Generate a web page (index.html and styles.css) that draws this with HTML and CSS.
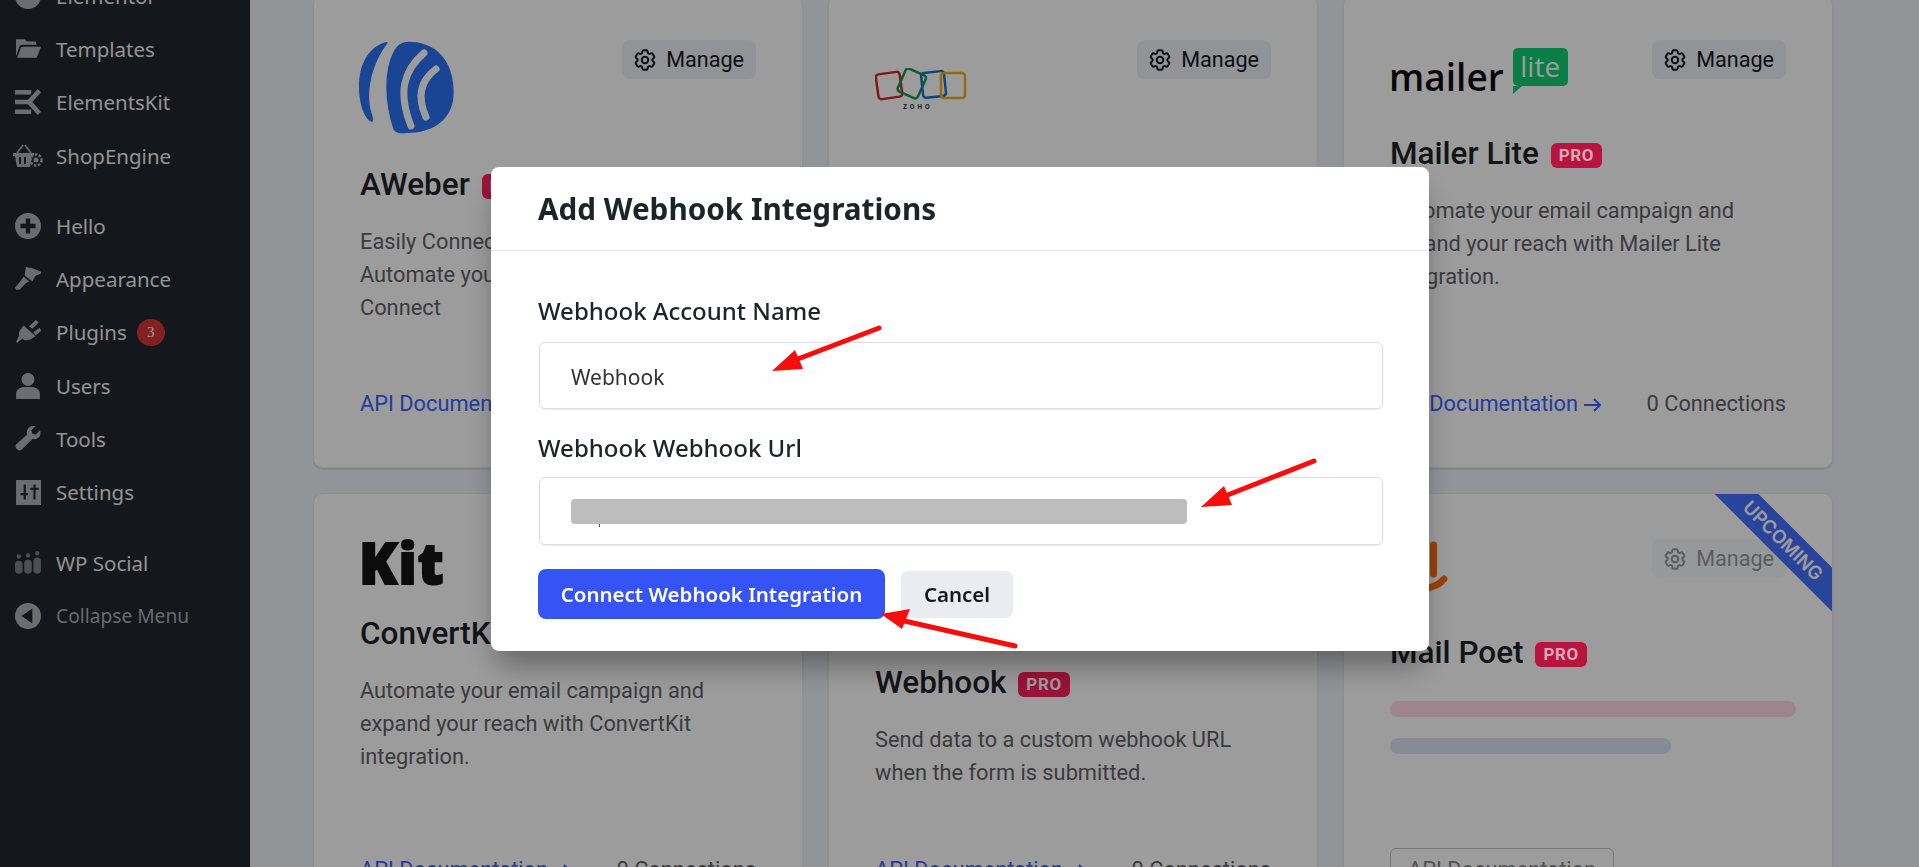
FILE: index.html
```html
<!DOCTYPE html>
<html lang="en">
<head>
    <meta charset="UTF-8">
    <title>Integrations</title>
    <link rel="stylesheet" href="styles.css">
</head>
<body>
    <div class="layout">
        <nav class="sidebar">
            <a class="menu-item menu-first"><svg class="menu-icon" viewBox="0 0 24 24"><circle cx="12" cy="12" r="12"/></svg>Elementor</a>
            <a class="menu-item"><svg class="menu-icon" viewBox="0 0 24 24"><path d="M1 3h8l2 2h8l1 3H7c-2 0-3 1-3 2l-3 9zM7 10h17l-4 10H2l3-8c0-1 1-2 2-2z"/></svg>Templates</a>
            <a class="menu-item"><svg class="menu-icon" viewBox="0 0 24 24"><path d="M0 1h15v4H0zM0 10h12v4H0zM0 19h15v4H0zM21 0l3 3-8 9 8 9-3 3-11-12z"/></svg>ElementsKit</a>
            <a class="menu-item"><svg class="menu-icon menu-icon-wide" viewBox="0 0 31 25"><path d="M0 10h21v2h-2l-2 12H4L2 13H0zM6 14v7h2v-7zM11 14v7h2v-7z"/><path fill="none" stroke="#a6aaae" stroke-width="1.800" d="M4 10l6-8M18 10l-6-8"/><circle cx="23" cy="17" r="5.500" fill="none" stroke="#b0b4b8" stroke-width="2.500" stroke-dasharray="2.500 1.500"/><circle cx="23" cy="17" r="2.500"/></svg>ShopEngine</a>
            <a class="menu-item menu-gap"><svg class="menu-icon" viewBox="0 0 24 24"><path fill-rule="evenodd" d="M12 0a12 12 0 1 0 0 24 12 12 0 0 0 0-24zM10 5h4v5h5v4h-5v5h-4v-5H5v-4h5z"/></svg>Hello</a>
            <a class="menu-item"><svg class="menu-icon" viewBox="0 0 24 24"><path d="M10 1l6 1 10 4-7 3-3 5-7-5zM8 10l5 4-3 2-6 6-3 0-1-2 5-6z"/></svg>Appearance</a>
            <a class="menu-item"><svg class="menu-icon" viewBox="0 0 24 24"><path d="M8 6l11 10-5 3c-3 1-6 1-7-1l-5 4-1-1 3-6c-1-2 0-4 1-5zM13 7l6-6 3 2-6 6zM17 12l6-4 1 3-5 4z"/></svg>Plugins<span class="update-badge">3</span></a>
            <a class="menu-item"><svg class="menu-icon" viewBox="0 0 24 24"><circle cx="12" cy="6" r="6"/><path d="M1 24v-5c0-3 4-6 7-6h8c3 0 7 3 7 6v5z"/></svg>Users</a>
            <a class="menu-item"><svg class="menu-icon" viewBox="0 0 24 24"><path d="M23 4l-4 4-3-1-1-3 4-4c-4-1-9 2-8 8L1 17c-2 3 2 7 5 5l10-10c5 1 9-3 7-8z"/></svg>Tools</a>
            <a class="menu-item"><svg class="menu-icon" viewBox="0 0 24 24"><path fill-rule="evenodd" d="M1 1h23v23H1zM8 5v8H5v2h3v4h2v-4h2v-2h-2V5zM17 5v3h-3v2h3v9h2v-9h3V8h-3V5z"/></svg>Settings</a>
            <a class="menu-item menu-gap menu-social"><svg class="menu-icon" viewBox="0 0 24 24"><circle cx="3.500" cy="6" r="2"/><circle cx="12" cy="5" r="2"/><circle cx="20.500" cy="3" r="2"/><rect x="0" y="10" width="7" height="12" rx="3.500"/><rect x="8.500" y="9" width="7" height="13" rx="3.500"/><rect x="17" y="7" width="7" height="15" rx="3.500"/></svg>WP Social</a>
            <a class="menu-item menu-collapse"><svg class="menu-icon" viewBox="0 0 24 24"><path fill-rule="evenodd" d="M12 0a12 12 0 1 0 0 24 12 12 0 0 0 0-24zM16 5v14L6 12z"/></svg>Collapse Menu</a>
        </nav>

        <main class="content">
            <div class="cards">
                <article class="card">
                    <button class="manage"><svg class="gear" viewBox="0 0 24 24"><use href="#gear"/></svg>Manage</button>
                    <div class="logo logo-aweber">
                        <svg width="95" height="93" viewBox="0 0 95 93"><path fill="#2b71f4" d="M27 1C12 5 0 20 0 46c0 18 6 33 13 35 2-1 1-4-1-11C7 52 12 24 28 3c1-2 1-2-1-2zM53 1C42 0 38 5 35 10 25 28 25 60 34 87c1 4 5 6 14 5 25 0 42-12 46-32 3-24-5-45-22-54-6-3-12-5-19-5z"/><path fill="none" stroke="#ffffff" stroke-width="7" stroke-linecap="round" d="M65 12C44 30 39 52 52 85M77 28C61 40 58 56 67 76"/></svg>
                    </div>
                    <h3 class="card-title">AWeber <span class="pro">PRO</span></h3>
                    <p class="card-text">Easily Connect AWeber to your forms.<br>Automate your email list growth.<br>Connect</p>
                    <div class="card-foot"><a class="doc-link">API Documentation <svg class="arrow" viewBox="0 0 19 16"><path d="M1 8h16M11 2l6 6-6 6"/></svg></a><span>0 Connections</span></div>
                </article>
                <article class="card">
                    <button class="manage"><svg class="gear" viewBox="0 0 24 24"><use href="#gear"/></svg>Manage</button>
                    <div class="logo logo-zoho">
                        <svg width="92" height="42" viewBox="0 0 92 42"><g fill="none" stroke-width="2.500"><rect x="2" y="5" width="24" height="25" rx="3" stroke="#d9232d" transform="rotate(-8 14 17)"/><rect x="26" y="3" width="22" height="25" rx="3" stroke="#129a4c" transform="rotate(24 37 15)"/><rect x="47" y="4" width="23" height="25" rx="3" stroke="#1f6fc4" transform="rotate(-6 58 16)"/><rect x="66" y="5" width="24" height="25" rx="3" stroke="#f0ae1f"/></g><text x="28" y="41" class="zoho-text">ZOHO</text></svg>
                    </div>
                    <h3 class="card-title">Zoho <span class="pro">PRO</span></h3>
                    <p class="card-text">Automate your email campaign.</p>
                    <div class="card-foot"><a class="doc-link">API Documentation <svg class="arrow" viewBox="0 0 19 16"><path d="M1 8h16M11 2l6 6-6 6"/></svg></a><span>0 Connections</span></div>
                </article>
                <article class="card">
                    <button class="manage"><svg class="gear" viewBox="0 0 24 24"><use href="#gear"/></svg>Manage</button>
                    <div class="logo logo-mailer">
                        <span class="mailer-word">mailer</span><span class="mailer-lite">lite</span>
                    </div>
                    <h3 class="card-title">Mailer Lite <span class="pro pro-bright">PRO</span></h3>
                    <p class="card-text">Automate your email campaign and<br>expand your reach with Mailer Lite<br>integration.</p>
                    <div class="card-foot"><a class="doc-link">API Documentation <svg class="arrow" viewBox="0 0 19 16"><path d="M1 8h16M11 2l6 6-6 6"/></svg></a><span>0 Connections</span></div>
                </article>
                <article class="card">
                    <button class="manage"><svg class="gear" viewBox="0 0 24 24"><use href="#gear"/></svg>Manage</button>
                    <div class="logo logo-kit">
                        <span class="kit-word">Kit</span>
                    </div>
                    <h3 class="card-title">ConvertKit <span class="pro">PRO</span></h3>
                    <p class="card-text">Automate your email campaign and<br>expand your reach with ConvertKit<br>integration.</p>
                    <div class="card-foot"><a class="doc-link">API Documentation <svg class="arrow" viewBox="0 0 19 16"><path d="M1 8h16M11 2l6 6-6 6"/></svg></a><span>0 Connections</span></div>
                </article>
                <article class="card">
                    <button class="manage"><svg class="gear" viewBox="0 0 24 24"><use href="#gear"/></svg>Manage</button>
                    <div class="logo logo-webhook"></div>
                    <h3 class="card-title">Webhook <span class="pro">PRO</span></h3>
                    <p class="card-text">Send data to a custom webhook URL<br>when the form is submitted.</p>
                    <div class="card-foot"><a class="doc-link">API Documentation <svg class="arrow" viewBox="0 0 19 16"><path d="M1 8h16M11 2l6 6-6 6"/></svg></a><span>0 Connections</span></div>
                </article>
                <article class="card">
                    <button class="manage manage-off"><svg class="gear" viewBox="0 0 24 24"><use href="#gear"/></svg>Manage</button>
                    <div class="ribbon">UPCOMING</div>
                    <div class="logo logo-poet">
                        <svg width="60" height="53" viewBox="0 0 60 53"><path fill="none" stroke="#ff690d" stroke-width="7" stroke-linecap="round" d="M43.500 5v29M10 45c14 6 36 5 44-6"/></svg>
                    </div>
                    <h3 class="card-title">Mail Poet <span class="pro pro-bright">PRO</span></h3>
                    <div class="skeleton skeleton-pink"></div>
                    <div class="skeleton skeleton-blue"></div>
                    <div class="card-foot"><a class="doc-box">API Documentation</a></div>
                </article>
            </div>
        </main>
    </div>

    <div class="backdrop"></div>

    <div class="modal">
        <h2 class="modal-title">Add Webhook Integrations</h2>
        <form class="modal-body">
            <label class="field-label">Webhook Account Name</label>
            <div class="field field-name">Webhook</div>
            <label class="field-label">Webhook Webhook Url</label>
            <div class="field field-url"><span class="blurred"></span></div>
            <div class="modal-actions">
                <button type="button" class="btn-connect">Connect Webhook Integration</button>
                <button type="button" class="btn-cancel">Cancel</button>
            </div>
        </form>
    </div>

    <!-- red markers on top of the screenshot -->
    <svg class="annotations" width="1919" height="867" viewBox="0 0 1919 867">
        <g stroke="#f80c0c" stroke-width="5" stroke-linecap="round" fill="#f80c0c">
            <line x1="879" y1="328" x2="790" y2="362"/>
            <line x1="1314" y1="461" x2="1220" y2="498"/>
            <line x1="1015" y1="646" x2="900" y2="620"/>
        </g>
        <g fill="#f80c0c">
            <path d="M772 371l23-21 8 19z"/>
            <path d="M1201 507l23-21 8 19z"/>
            <path d="M881 614l29-5-8 20z"/>
        </g>
    </svg>

    <svg class="sprite" width="0" height="0">
        <symbol id="gear" viewBox="0 0 24 24">
            <path fill="none" stroke="currentColor" stroke-width="1.800" stroke-linejoin="round" d="M9.594 3.940c.09-.542.56-.94 1.110-.94h2.593c.55 0 1.020.398 1.110.94l.213 1.281c.063.374.313.686.645.87.074.04.147.083.22.127.325.196.72.257 1.075.124l1.217-.456a1.125 1.125 0 0 1 1.370.49l1.296 2.247a1.125 1.125 0 0 1-.26 1.431l-1.003.827c-.293.241-.438.613-.43.992a7.723 7.723 0 0 1 0 .255c-.008.378.137.75.43.991l1.004.827c.424.35.534.955.26 1.430l-1.298 2.247a1.125 1.125 0 0 1-1.369.491l-1.217-.456c-.355-.133-.75-.072-1.076.124a6.470 6.470 0 0 1-.22.128c-.331.183-.581.495-.644.869l-.213 1.281c-.09.543-.56.94-1.110.94h-2.594c-.55 0-1.019-.398-1.110-.94l-.213-1.281c-.062-.374-.312-.686-.644-.87a6.520 6.520 0 0 1-.22-.127c-.325-.196-.72-.257-1.076-.124l-1.217.456a1.125 1.125 0 0 1-1.369-.49l-1.297-2.247a1.125 1.125 0 0 1 .26-1.431l1.004-.827c.292-.24.437-.613.43-.991a6.932 6.932 0 0 1 0-.255c.007-.38-.138-.751-.43-.992l-1.004-.827a1.125 1.125 0 0 1-.26-1.430l1.297-2.247a1.125 1.125 0 0 1 1.370-.491l1.216.456c.356.133.751.072 1.076-.124.072-.044.146-.086.22-.128.332-.183.582-.495.644-.869l.214-1.280z"/>
            <circle cx="12" cy="12" r="3" fill="none" stroke="currentColor" stroke-width="1.800"/>
        </symbol>
    </svg>
</body>
</html>
```

FILE: styles.css
```css
* {
    box-sizing: border-box;
}
html, body {
    margin: 0;
    height: 100%;
    overflow: hidden;
}
body {
    font-family: Roboto, sans-serif;
    background-color: #f1f2f9;
}
.layout {
    display: flex;
    height: 867px;
    overflow: hidden;
}

/* admin menu */
.sidebar {
    width: 250px;
    flex-shrink: 0;
    background-color: #21262f;
    font-family: "Noto Sans", sans-serif;
    font-size: 20.5px;
    color: #f0f0f1;
}
.menu-item {
    display: flex;
    align-items: center;
    height: 53.3px;
    padding-left: 15px;
}
.menu-first {
    margin-top: -31px;
}
.menu-gap {
    margin-top: 17px;
}
.menu-icon {
    width: 26px;
    height: 26px;
    margin-right: 15px;
    fill: #b0b4b8;
}
.menu-icon-wide {
    width: 31px;
    height: 25px;
    margin-left: -2px;
    margin-right: 12px;
}
.menu-collapse {
    color: #acafb4;
    font-size: 19.2px;
}
.menu-social .menu-icon {
    fill: #7d8085;
}
.update-badge {
    display: inline-block;
    margin-left: 10px;
    width: 28px;
    height: 27px;
    line-height: 27px;
    border-radius: 14px;
    background-color: #d63638;
    color: #fff;
    font-family: "Liberation Serif", serif;
    font-size: 15px;
    text-align: center;
}

/* integration cards */
.content {
    flex: 1;
    padding: 0 86px 0 63px;
}
.cards {
    display: grid;
    grid-template-columns: repeat(3, 490px);
    grid-template-rows: 474px 441px;
    gap: 25px;
    margin-top: -6px;
}
.card {
    position: relative;
    display: flex;
    flex-direction: column;
    padding: 46px 46px 50px;
    background-color: #fff;
    border: 1px solid #e8e8f0;
    border-radius: 10px;
    box-shadow: 0 2px 2px rgba(0, 0, 0, 0.1);
    overflow: hidden;
}
.manage {
    position: absolute;
    top: 45px;
    right: 46px;
    display: flex;
    align-items: center;
    gap: 8px;
    height: 39px;
    padding: 0 12px 0 10px;
    border: 0;
    border-radius: 8px;
    background-color: #eef0f6;
    color: #14171f;
    font-family: Roboto, sans-serif;
    font-size: 21.6px;
}
.manage-off {
    opacity: 0.45;
}
.gear {
    width: 26px;
    height: 26px;
}
.logo-aweber {
    height: 93px;
    margin-left: -1px;
    margin-bottom: 32px;
}
.logo-zoho {
    height: 41px;
    margin-top: 27px;
    margin-bottom: 58px;
}
.logo-mailer {
    display: flex;
    align-items: flex-end;
    height: 46px;
    margin-top: 7px;
    margin-left: -1px;
    margin-bottom: 41px;
    font-family: "Open Sans", sans-serif;
}
.mailer-word {
    margin-bottom: -6px;
    font-size: 37px;
    font-weight: 600;
    line-height: 46px;
    color: #0d0d0f;
}
.mailer-lite {
    position: relative;
    width: 55px;
    height: 38px;
    margin-left: 9px;
    margin-bottom: 8px;
    border-radius: 5px;
    background-color: #12cc74;
    color: #fff;
    font-size: 28px;
    line-height: 36px;
    text-align: center;
}
.mailer-lite::after {
    content: "";
    position: absolute;
    left: 0;
    bottom: -8px;
    border-top: 8px solid #12cc74;
    border-right: 9px solid transparent;
}
.logo-kit {
    height: 44px;
    margin-left: -1px;
    margin-bottom: 31px;
}
.kit-word {
    font-family: "Open Sans", sans-serif;
    font-size: 56px;
    font-weight: 800;
    line-height: 44px;
    letter-spacing: 1px;
    color: #141416;
    -webkit-text-stroke: 2px #141416;
}
.logo-webhook {
    height: 124px;
}
.logo-poet {
    height: 53px;
    margin-bottom: 41px;
}
.card-title {
    margin: 0 0 21px;
    font-size: 31.5px;
    font-weight: 500;
    line-height: 38px;
    color: #1d2327;
}
.pro {
    display: inline-block;
    margin-left: 4px;
    padding: 0 8px;
    height: 25px;
    line-height: 25px;
    border-radius: 6px;
    background-color: #ff1e5c;
    color: #fff;
    font-size: 17px;
    font-weight: 700;
    letter-spacing: 0.6px;
    vertical-align: 3px;
}
/* these two sit above the dimmed layer in the shot */
.pro-bright {
    position: relative;
    z-index: 3;
    background-color: #b9143f;
    color: #dba8b8;
}
.card-text {
    margin: 0;
    font-size: 21.8px;
    line-height: 33px;
    color: #616168;
}
.card-foot {
    display: flex;
    justify-content: space-between;
    margin-top: auto;
    font-size: 21.8px;
    line-height: 26px;
    color: #616168;
}
.doc-link {
    color: #4060ff;
}
.arrow {
    width: 19px;
    height: 16px;
    vertical-align: -2px;
    fill: none;
    stroke: currentColor;
    stroke-width: 2;
}
.doc-box {
    display: block;
    margin: -9px 0;
    padding: 8px 17px;
    border: 1px solid #c4c4c4;
    border-radius: 6px;
    color: #888;
}
.skeleton {
    height: 16px;
    border-radius: 8px;
}
.skeleton-pink {
    width: 406px;
    margin-top: 8px;
    background-color: #ffd9e6;
}
.skeleton-blue {
    width: 281px;
    margin-top: 21px;
    background-color: #dfe3f5;
}
.ribbon {
    position: absolute;
    top: 31px;
    right: -71px;
    width: 240px;
    height: 31px;
    line-height: 31px;
    transform: rotate(45deg);
    background-color: #4570ff;
    color: #fff;
    font-family: Inter, sans-serif;
    font-size: 18.5px;
    font-weight: 600;
    text-align: center;
}

/* modal */
.backdrop {
    position: fixed;
    inset: 0;
    z-index: 2;
    background-color: rgba(0, 0, 0, 0.39);
}
.modal {
    position: fixed;
    left: 491px;
    top: 167px;
    z-index: 4;
    width: 938px;
    height: 484px;
    background-color: #fff;
    border-radius: 8px;
    box-shadow: 0 20px 30px -5px rgba(0, 0, 0, 0.35);
    font-family: "Noto Sans", sans-serif;
    color: #1d2327;
}
.modal-title {
    margin: 0;
    height: 84px;
    padding: 0 47px;
    border-bottom: 1px solid #e4e4ec;
    font-size: 29.7px;
    font-weight: 700;
    line-height: 84px;
}
.modal-body {
    padding: 42px 47px 0;
}
.field-label {
    display: block;
    font-size: 24px;
    font-weight: 500;
    line-height: 36px;
}
.field {
    display: flex;
    align-items: center;
    width: 844px;
    margin-left: 1px;
    padding: 0 31px;
    border: 1px solid #dcdce4;
    border-radius: 6px;
    box-shadow: 0 1px 2px rgba(0, 0, 0, 0.08);
    font-size: 21px;
    color: #333;
}
.field-name {
    height: 67px;
    margin-top: 13px;
    margin-bottom: 21px;
    padding-top: 3px;
}
.field-url {
    height: 68px;
    margin-top: 11px;
}
.blurred {
    position: relative;
    width: 616px;
    height: 25px;
    border-radius: 4px;
    background-color: #bdbdbd;
}
/* a bit of the url still shows under the blur */
.blurred::after {
    content: "";
    position: absolute;
    left: 28px;
    bottom: -3px;
    width: 1px;
    height: 3px;
    background-color: #555;
}
.modal-actions {
    display: flex;
    align-items: center;
    gap: 16px;
    margin-top: 24px;
}
.btn-connect, .btn-cancel {
    border: 0;
    border-radius: 8px;
    font-family: "Noto Sans", sans-serif;
    font-size: 20.5px;
    font-weight: 600;
}
.btn-connect {
    width: 347px;
    height: 50px;
    background-color: #3654f5;
    color: #fff;
}
.btn-cancel {
    width: 112px;
    height: 47px;
    background-color: #ebecf2;
    color: #14171f;
}
.annotations {
    position: fixed;
    left: 0;
    top: 0;
    z-index: 5;
}
.sprite {
    position: absolute;
}
.zoho-text {
    font-family: Inter, sans-serif;
    font-size: 6px;
    font-weight: 700;
    letter-spacing: 3px;
    fill: #222;
}
```
